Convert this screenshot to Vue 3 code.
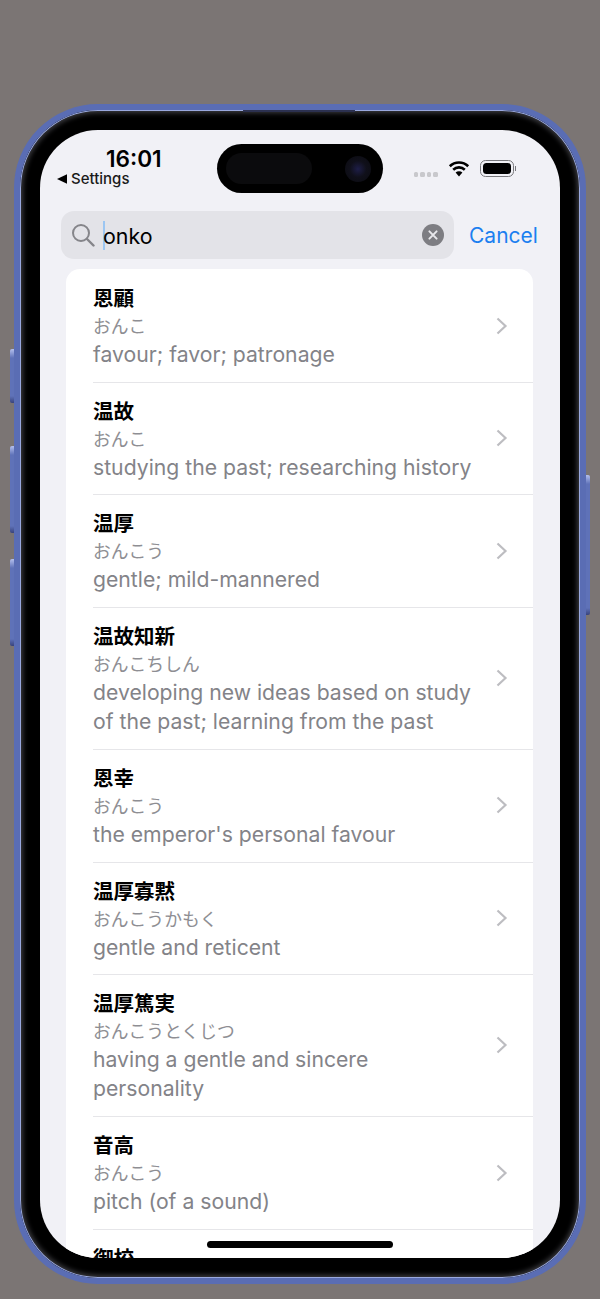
<script setup>
const entries = [
  { word: '恩顧', reading: 'おんこ', gloss: 'favour; favor; patronage' },
  { word: '温故', reading: 'おんこ', gloss: 'studying the past; researching history' },
  { word: '温厚', reading: 'おんこう', gloss: 'gentle; mild-mannered' },
  { word: '温故知新', reading: 'おんこちしん', gloss: 'developing new ideas based on study of the past; learning from the past' },
  { word: '恩幸', reading: 'おんこう', gloss: "the emperor's personal favour" },
  { word: '温厚寡黙', reading: 'おんこうかもく', gloss: 'gentle and reticent' },
  { word: '温厚篤実', reading: 'おんこうとくじつ', gloss: 'having a gentle and sincere personality' },
  { word: '音高', reading: 'おんこう', gloss: 'pitch (of a sound)' },
  { word: '御校', reading: 'おんこう', gloss: 'your school' }
]
</script>

<template>
  <div class="page">
    <div class="phone">
      <span class="side-btn left btn1"></span>
      <span class="side-btn left btn2"></span>
      <span class="side-btn left btn3"></span>
      <span class="side-btn right btn4"></span>
      <span class="speaker"></span>

      <div class="screen">
        <div class="island">
          <span class="island-pill"></span>
          <span class="camera"></span>
        </div>

        <div class="status">
          <div class="status-left">
            <div class="time">16:01</div>
            <div class="back">
              <svg class="back-arrow" width="10" height="10" viewBox="0 0 10 10">
                <path d="M0 5 L10 0.3 V9.7 Z" fill="#000" />
              </svg>
              <span>Settings</span>
            </div>
          </div>
          <div class="status-right">
            <div class="dots"><i></i><i></i><i></i><i></i></div>
            <svg class="wifi" width="22" height="17" viewBox="0 0 22 17">
              <path d="M1.8 6.2 A13.2 13.2 0 0 1 20.2 6.2" fill="none" stroke="#000" stroke-width="2.6" />
              <path d="M5.2 9.7 A8.4 8.4 0 0 1 16.8 9.7" fill="none" stroke="#000" stroke-width="2.6" />
              <path d="M7.6 12.6 A4.9 4.9 0 0 1 14.4 12.6 L11 16.4 Z" fill="#000" />
            </svg>
            <div class="battery">
              <div class="battery-body"><span></span></div>
              <span class="battery-nub"></span>
            </div>
          </div>
        </div>

        <div class="search-row">
          <div class="search">
            <svg class="search-icon" width="24" height="24" viewBox="0 0 24 24">
              <circle cx="10" cy="10" r="8" fill="none" stroke="#85858a" stroke-width="2" />
              <path d="M16 16 L22.5 22.5" stroke="#85858a" stroke-width="2.4" stroke-linecap="round" />
            </svg>
            <span class="caret"></span>
            <span class="query">onko</span>
            <svg class="clear" width="22" height="22" viewBox="0 0 22 22">
              <circle cx="11" cy="11" r="11" fill="#7d7d82" />
              <path d="M7.4 7.4 L14.6 14.6 M14.6 7.4 L7.4 14.6" stroke="#e8e8ec" stroke-width="2" stroke-linecap="round" />
            </svg>
          </div>
          <span class="cancel">Cancel</span>
        </div>

        <div class="card">
          <div v-for="item in entries" :key="item.word" class="row">
            <div class="row-text">
              <div class="word">{{ item.word }}</div>
              <div class="reading">{{ item.reading }}</div>
              <div class="gloss">{{ item.gloss }}</div>
            </div>
            <svg class="chevron" width="12" height="18" viewBox="0 0 12 18">
              <path d="M1.5 1.5 L9.5 9 L1.5 16.5" fill="none" stroke="#bdbdc1" stroke-width="2.2" />
            </svg>
          </div>
        </div>

        <div class="home-bar"></div>
      </div>
    </div>
  </div>
</template>

<style>
html, body {
  margin: 0;
  background: #7b7574;
}
</style>

<style scoped>
.page {
  width: 600px;
  height: 1299px;
  box-sizing: border-box;
  padding: 104px 14px 15px;
  background: #7b7574;
  overflow: hidden;
  font-family: Inter, "Noto Sans CJK JP", sans-serif;
}

.phone {
  position: relative;
  height: 1180px;
  box-sizing: border-box;
  padding: 20px;
  border: 6px solid #5a6db4;
  border-radius: 84px;
  background: #000;
  box-shadow: inset 0 0 0 1px #9aa9df, inset 0 0 5px 3px #3c3c40;
}

.side-btn {
  position: absolute;
  width: 4px;
  background: linear-gradient(180deg, #b4c0ee 0, #5f72b8 9px, #5f72b8 calc(100% - 7px), #38437c 100%);
  border-radius: 2px 0 0 2px;
}

.side-btn.left {
  left: -10px;
}

.side-btn.right {
  right: -10px;
  border-radius: 0 2px 2px 0;
}

.btn1 {
  top: 239px;
  height: 54px;
}

.btn2 {
  top: 336px;
  height: 87px;
}

.btn3 {
  top: 449px;
  height: 87px;
}

.btn4 {
  top: 365px;
  height: 140px;
}

.speaker {
  position: absolute;
  top: 0;
  left: 223px;
  width: 112px;
  height: 2px;
  background: #2c3150;
}

.screen {
  position: relative;
  height: 1128px;
  border-radius: 58px;
  overflow: hidden;
  background: #f1f1f6;
}

.island {
  position: absolute;
  top: 14px;
  left: 177px;
  width: 166px;
  height: 49px;
  border-radius: 25px;
  background: #000;
}

.island-pill {
  position: absolute;
  top: 9px;
  left: 9px;
  width: 86px;
  height: 31px;
  border-radius: 16px;
  background: #0b0b0d;
}

.camera {
  position: absolute;
  top: 12px;
  left: 128px;
  width: 26px;
  height: 26px;
  border-radius: 50%;
  background: radial-gradient(circle, #1e1e48 0%, #10101a 45%, #0a0a10 100%);
}

.status {
  display: flex;
  justify-content: space-between;
  height: 81px;
  box-sizing: border-box;
  padding: 17px 44px 0 17px;
}

.time {
  margin-left: 49px;
  font-size: 22.6px;
  line-height: 24px;
  font-weight: 600;
  color: #000;
}

.back {
  display: flex;
  align-items: center;
  gap: 4px;
  font-size: 15px;
  line-height: 16px;
  font-weight: 500;
  color: #1a1a1a;
}

.status-right {
  display: flex;
  align-items: flex-start;
  padding-top: 13px;
}

.dots {
  display: flex;
  gap: 2px;
  margin-top: 12px;
  margin-right: 10px;
}

.dots i {
  width: 4.5px;
  height: 5px;
  border-radius: 1.5px;
  background: #c8c8cc;
}

.wifi {
  margin-right: 10px;
}

.battery {
  display: flex;
  align-items: center;
  height: 17px;
}

.battery-body {
  width: 34px;
  height: 17px;
  box-sizing: border-box;
  padding: 2px;
  border: 1px solid #77777b;
  border-radius: 5.5px;
}

.battery-body span {
  display: block;
  height: 100%;
  border-radius: 3.5px;
  background: #000;
}

.battery-nub {
  width: 1.5px;
  height: 5px;
  margin-left: 1px;
  background: #77777b;
}

.search-row {
  display: flex;
  align-items: center;
  padding: 0 23px 0 21px;
}

.search {
  flex: none;
  display: flex;
  align-items: center;
  width: 393px;
  height: 48px;
  box-sizing: border-box;
  padding: 0 10px 0 10px;
  border-radius: 13px;
  background: #e3e3e8;
}

.search-icon {
  flex: none;
}

.caret {
  flex: none;
  width: 2px;
  height: 29px;
  margin-left: 8px;
  margin-right: -2px;
  background: #9cc6f2;
}

.query {
  flex: 1;
  padding-top: 2px;
  font-size: 21.4px;
  color: #000;
}

.clear {
  flex: none;
}

.cancel {
  margin-left: 15px;
  font-size: 21px;
  color: #1b7ff0;
}

.card {
  margin: 10px 27px 0 26px;
  padding-top: 1px;
  border-radius: 14px;
  background: #fff;
}

.row {
  display: flex;
  align-items: center;
  margin-left: 27px;
  padding: 15px 25px 12.72px 0;
  border-bottom: 1px solid #e6e6e9;
}

.row-text {
  flex: 1;
  min-width: 0;
  padding-right: 19px;
}

.word {
  font-size: 20.5px;
  line-height: 28px;
  font-weight: 700;
  color: #000;
}

.reading {
  font-size: 17.8px;
  line-height: 28px;
  color: #8e8e93;
}

.gloss {
  margin-top: -1px;
  font-size: 21.2px;
  line-height: 29px;
  color: #838388;
}

.chevron {
  flex: none;
  margin-bottom: 3px;
}

.home-bar {
  position: absolute;
  left: 167px;
  bottom: 10px;
  width: 186px;
  height: 7px;
  border-radius: 4px;
  background: #000;
}
</style>
